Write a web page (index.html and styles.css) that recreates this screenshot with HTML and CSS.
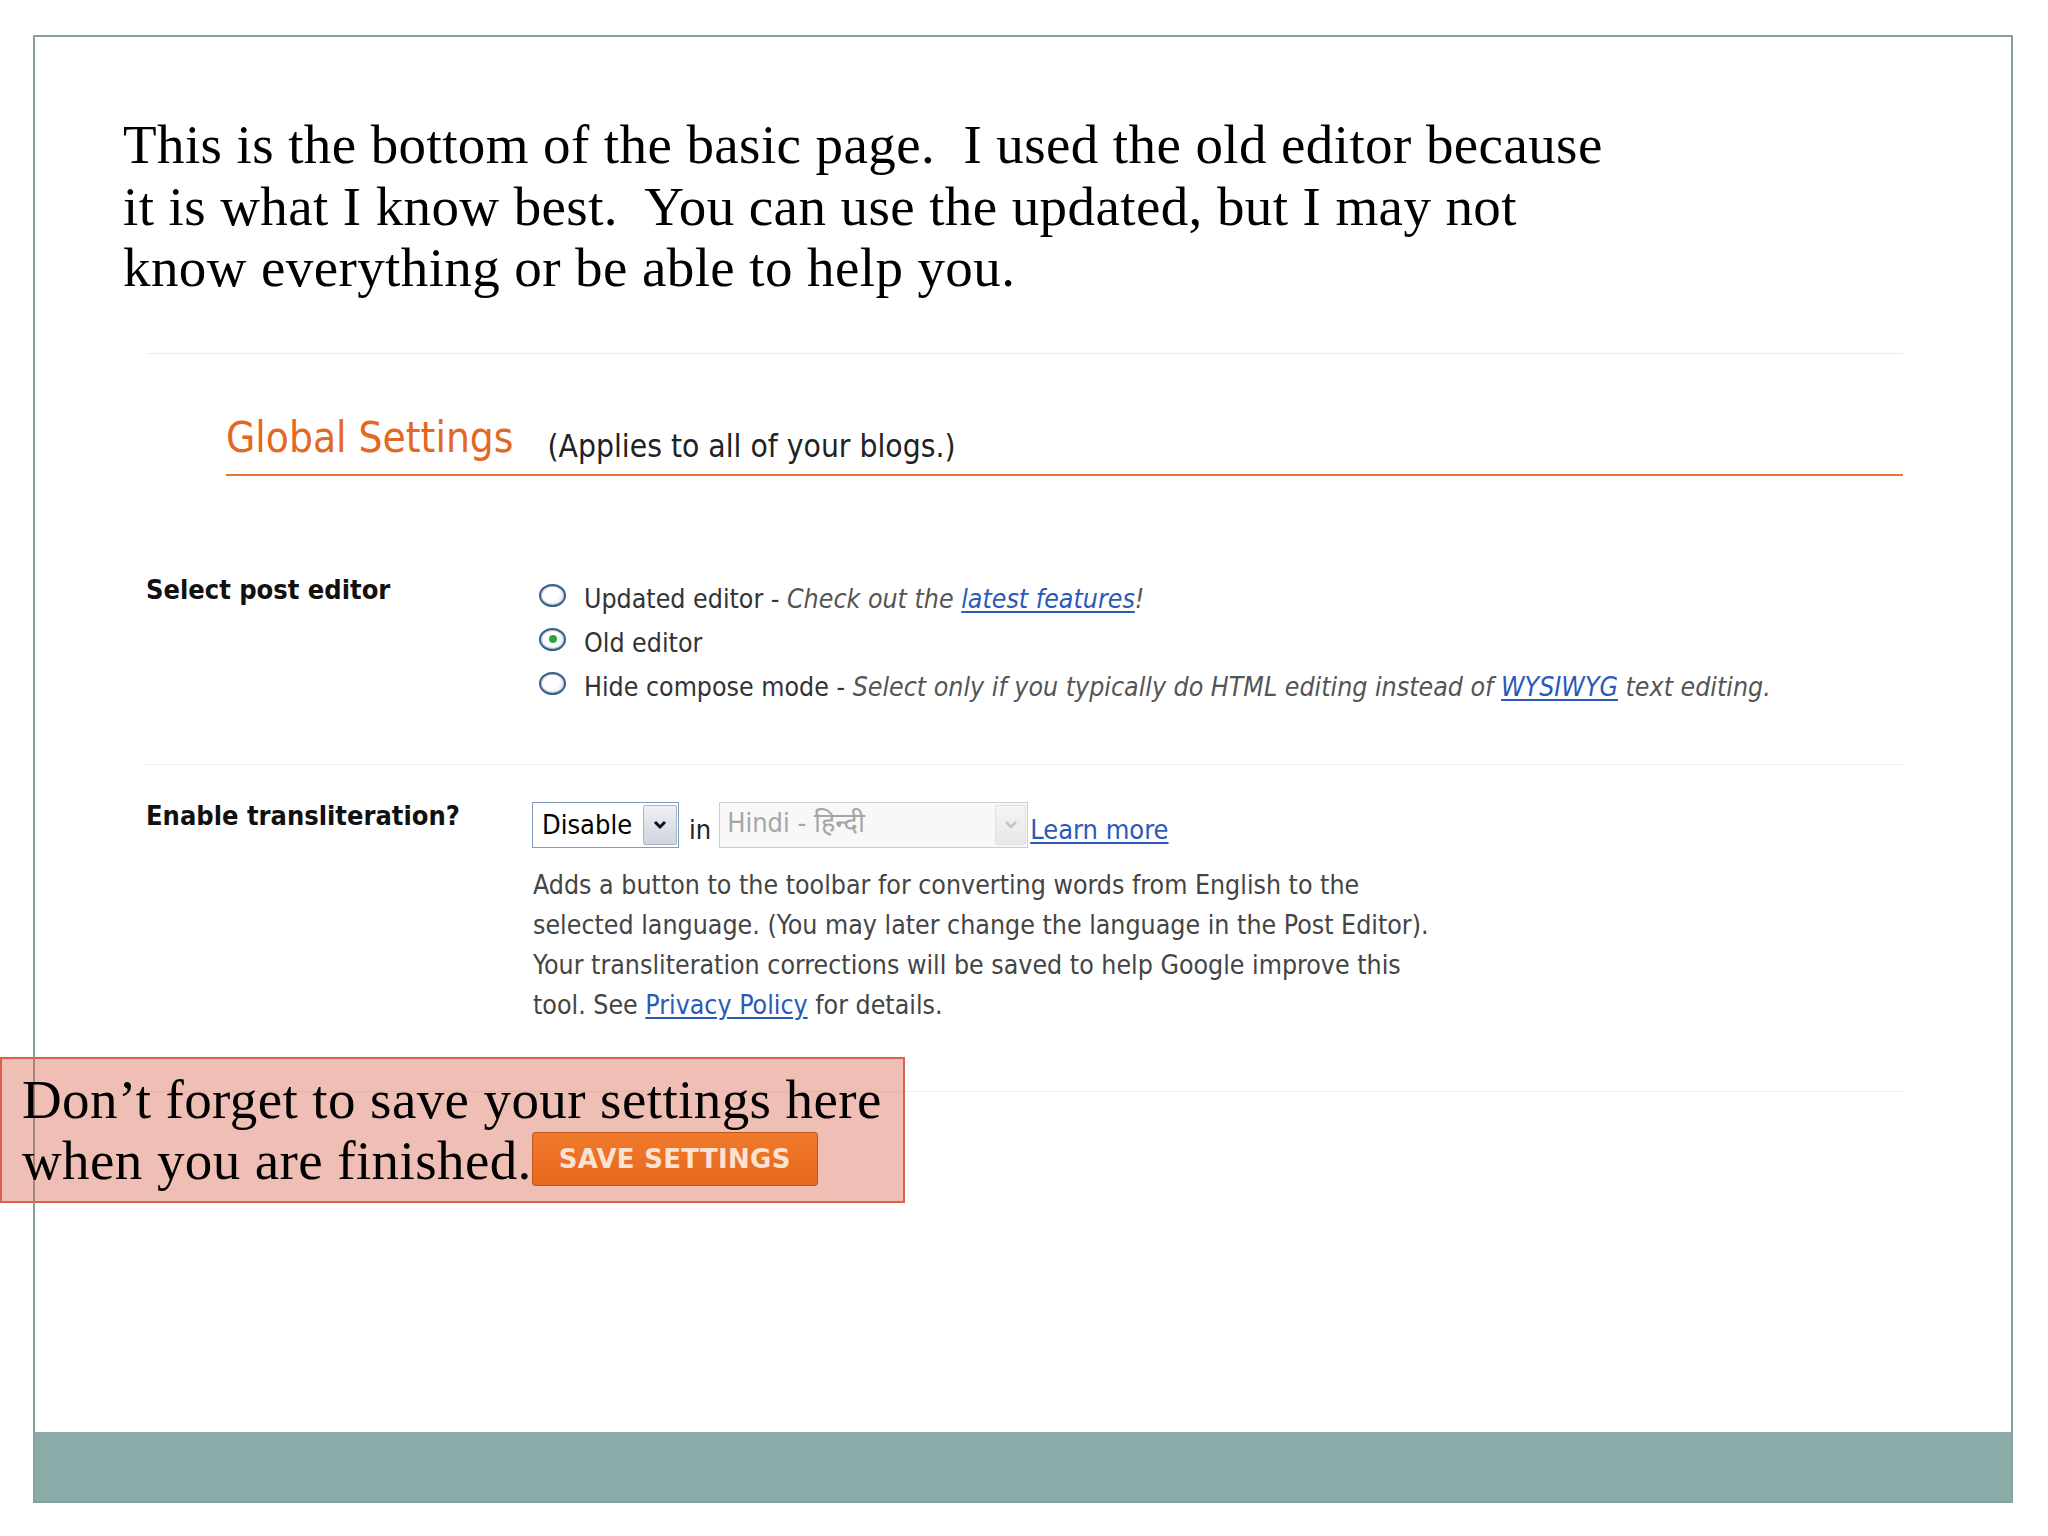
FILE: index.html
```html
<!DOCTYPE html>
<html lang="en">
<head>
<meta charset="utf-8">
<title>Global Settings</title>
<link rel="stylesheet" href="styles.css">
</head>
<body>
<div class="slide">
  <div class="frame">
    <div class="main">
      <p class="intro">This is the bottom of the basic page.&nbsp; I used the old editor because<br>it is what I know best.&nbsp; You can use the updated, but I may not<br>know everything or be able to help you.</p>
      <section class="settings">
        <div class="gs-head">
          <span class="gs-title">Global Settings</span>
          <span class="gs-note">(Applies to all of your blogs.)</span>
        </div>
        <div class="row row-editor">
          <div class="label label-editor">Select post editor</div>
          <div class="options">
            <div class="opt"><span class="radio"></span><span class="opt-text">Updated editor - <em>Check out the <a href="#" class="link">latest features</a>!</em></span></div>
            <div class="opt"><span class="radio checked"></span><span class="opt-text">Old editor</span></div>
            <div class="opt"><span class="radio"></span><span class="opt-text">Hide compose mode - <em>Select only if you typically do HTML editing instead of <a href="#" class="link">WYSIWYG</a> text editing.</em></span></div>
          </div>
        </div>
        <div class="row row-translit">
          <div class="label label-translit">Enable transliteration?</div>
          <div class="translit">
            <div class="controls">
              <div class="select">
                <span class="select-value">Disable</span>
                <span class="select-btn"><svg width="14" height="10" viewBox="0 0 14 10"><polyline points="2,2 7,7 12,2" fill="none" stroke="#111" stroke-width="3"/></svg></span>
              </div>
              <span class="in">in</span>
              <div class="select select-disabled">
                <span class="select-value">Hindi - हिन्दी</span>
                <span class="select-btn"><svg width="14" height="10" viewBox="0 0 14 10"><polyline points="2,2 7,7 12,2" fill="none" stroke="#c4c4c4" stroke-width="2.5"/></svg></span>
              </div>
              <a href="#" class="link learn">Learn more</a>
            </div>
            <p class="desc">Adds a button to the toolbar for converting words from English to the<br>selected language. (You may later change the language in the Post Editor).<br>Your transliteration corrections will be saved to help Google improve this<br>tool. See <a href="#" class="link">Privacy Policy</a> for details.</p>
          </div>
        </div>
      </section>
    </div>
    <div class="bar"></div>
  </div>
  <div class="callout">
    <p class="callout-text">Don’t forget to save your settings here<br>when you are finished.<span class="save-btn">SAVE SETTINGS</span></p>
  </div>
</div>
</body>
</html>
```

FILE: styles.css
```css
html, body {
  margin: 0;
  padding: 0;
  background: #ffffff;
}

.slide {
  position: relative;
  width: 2048px;
  height: 1536px;
  padding: 35px 0 0 33px;
  box-sizing: border-box;
  overflow: hidden;
  background: #ffffff;
}

.frame {
  width: 1980px;
  height: 1468px;
  border: 2px solid #86a29e;
  box-sizing: border-box;
  display: flex;
  flex-direction: column;
}

.main {
  flex: 1;
  padding-top: 77px;
}

.bar {
  height: 69px;
  background: #8aaba8;
}

.intro {
  margin: 0 0 0 88px;
  font-family: "Liberation Serif", "Times New Roman", serif;
  font-size: 55px;
  letter-spacing: 0.4px;
  line-height: 61.5px;
  color: #000;
  white-space: nowrap;
}

.settings {
  margin: 54px 0 0 111px;
  width: 1757px;
  border-top: 1px solid #ececec;
  font-family: "DejaVu Sans", "Noto Sans Devanagari", "Lohit Devanagari", "FreeSans", sans-serif;
  font-stretch: condensed;
}

.gs-head {
  margin-left: 80px;
  padding: 62px 0 14px 0;
  border-bottom: 2px solid #e8772f;
  font-size: 42px;
  line-height: 44px;
  white-space: nowrap;
}

.gs-title {
  color: #e2691f;
}

.gs-note {
  font-size: 31.5px;
  line-height: 20px;
  color: #222;
  margin-left: 22px;
  vertical-align: -5px;
}

.row {
  display: grid;
  grid-template-columns: 386px 1fr;
  border-bottom: 1px solid #efefef;
}

.label {
  font-size: 27px;
  font-weight: bold;
  line-height: 44px;
  color: #111;
  white-space: nowrap;
}

.label-editor {
  padding-top: 92px;
}

.options {
  padding: 101px 0 55px 7px;
}

.opt {
  display: flex;
  align-items: center;
  height: 44px;
  font-size: 26.5px;
  color: #333;
  white-space: nowrap;
}

.opt em {
  color: #555;
}

.radio {
  width: 27px;
  height: 23px;
  border-radius: 50%;
  border: 2px solid #3b5f87;
  box-shadow: inset 0 0 0 1px #b9c6d6;
  box-sizing: border-box;
  background: radial-gradient(circle at 40% 35%, #ffffff 40%, #dfe2e8 100%);
  margin-right: 18px;
  margin-top: -7px;
  display: flex;
  align-items: center;
  justify-content: center;
  flex: none;
}

.radio.checked::after {
  content: "";
  width: 8px;
  height: 8px;
  border-radius: 50%;
  background: #2fa23a;
}

.link {
  color: #2a5ab8;
  text-decoration: underline;
  text-underline-offset: 3px;
}

.label-translit {
  padding-top: 29px;
}

.translit {
  padding: 37px 0 66px 0;
}

.controls {
  display: flex;
  align-items: center;
  height: 46px;
  white-space: nowrap;
}

.select {
  display: flex;
  align-items: center;
  justify-content: space-between;
  width: 147px;
  height: 46px;
  box-sizing: border-box;
  border: 1px solid #7f9db9;
  background: #fff;
  padding: 2px 1px 2px 9px;
}

.select-value {
  font-size: 27px;
  color: #000;
}

.select-btn {
  width: 34px;
  height: 40px;
  box-sizing: border-box;
  border: 1px solid #a9b6c8;
  border-radius: 2px;
  background: linear-gradient(#eef0f4, #cfd4de);
  display: flex;
  align-items: center;
  justify-content: center;
}

.in {
  font-size: 27px;
  color: #222;
  margin: 10px 8px 0 10px;
}

.select-disabled {
  width: 309px;
  border-color: #cdcdcd;
  background: #f8f8f8;
  padding-left: 7px;
}

.select-disabled .select-value {
  color: #a6a6a6;
}

.select-disabled .select-btn {
  width: 31px;
  border-color: #e2e2e2;
  background: linear-gradient(#f4f4f4, #e8e8e8);
}

.learn {
  font-size: 27px;
  margin: 10px 0 0 2px;
}

.desc {
  margin: 17px 0 0 1px;
  font-size: 26.5px;
  line-height: 40px;
  color: #444;
  white-space: nowrap;
}

.callout {
  position: absolute;
  left: 0;
  top: 1057px;
  width: 905px;
  height: 146px;
  box-sizing: border-box;
  border: 2px solid #d8634a;
  background: rgba(214, 96, 72, 0.4);
  padding: 10px 0 0 20px;
}

.callout-text {
  margin: 0;
  font-family: "Liberation Serif", "Times New Roman", serif;
  font-size: 55px;
  letter-spacing: 0.4px;
  line-height: 61px;
  color: #000;
  white-space: nowrap;
}

.save-btn {
  display: inline-block;
  vertical-align: 11px;
  width: 286px;
  height: 54px;
  box-sizing: border-box;
  border: 1px solid #c0561c;
  border-radius: 3px;
  background: linear-gradient(#f07a2c, #e8681c);
  color: #fbe2d2;
  font-family: "DejaVu Sans", sans-serif;
  font-weight: bold;
  font-size: 26px;
  letter-spacing: 0.3px;
  line-height: 52px;
  text-align: center;
}
```
